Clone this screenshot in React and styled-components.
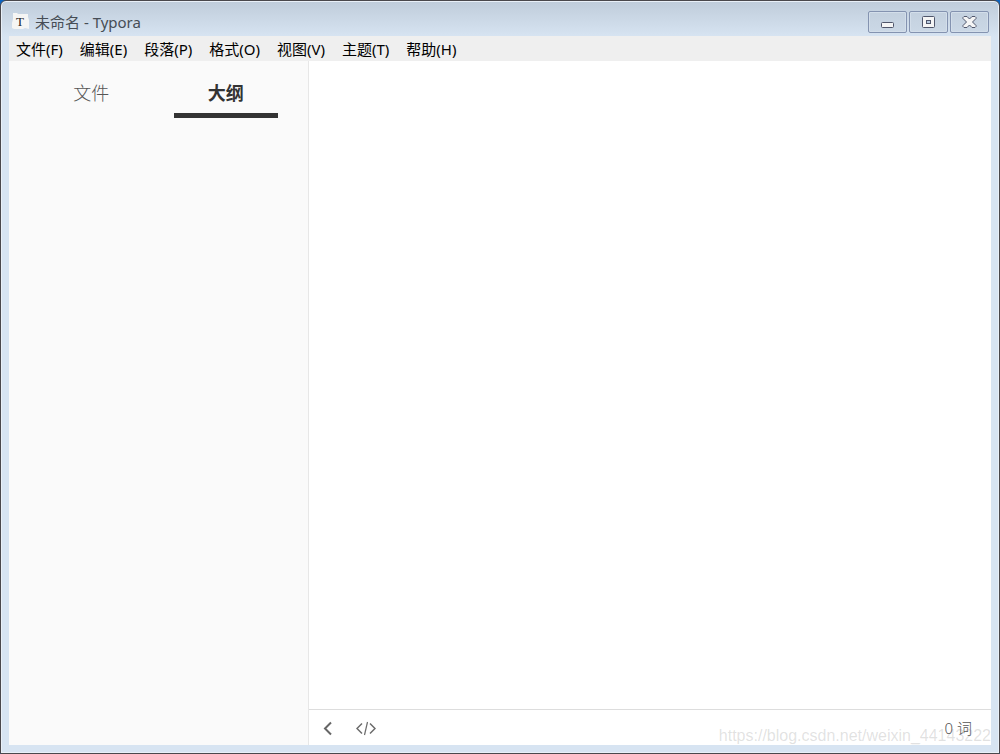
import React from 'react';
import styled, { createGlobalStyle } from 'styled-components';

const GlobalStyle = createGlobalStyle`
  * {
    box-sizing: border-box;
  }

  body {
    margin: 0;
    background: #0a63c2;
    font-family: 'Noto Sans', 'Noto Sans CJK SC', sans-serif;
  }

  button {
    padding: 0;
    border: none;
    background: none;
    font-family: inherit;
    cursor: pointer;
  }
`;

const Window = styled.div`
  display: flex;
  flex-direction: column;
  min-height: 100vh;
  padding: 0 7px 7px;
  border: 1px solid #4a484c;
  border-radius: 6px 6px 0 0;
  background: linear-gradient(#bfccda, #d7e4f2 36px);
  box-shadow: inset 0 0 0 1px #e9f0f8;
`;

const TitleBar = styled.header`
  display: flex;
  align-items: center;
  height: 35px;
  padding: 6px 3px 0 4px;
`;

const Title = styled.h1`
  flex: 1;
  margin: 0 0 0 6px;
  color: #464d55;
  font-size: 15px;
  font-weight: 400;
  line-height: 20px;
`;

const WindowButtons = styled.div`
  display: flex;
  gap: 2px;
`;

const WindowButton = styled.button`
  display: flex;
  align-items: center;
  justify-content: center;
  width: 39px;
  height: 22px;
  border: 1px solid #8493b0;
  border-radius: 2px;
  background: linear-gradient(#c3d0de, #cbd8e6);
  box-shadow: inset 0 0 0 1px #d3deea;
`;

const Client = styled.div`
  display: flex;
  flex: 1;
  flex-direction: column;
  margin: 0 1px 1px;
  background: #fff;
`;

const MenuBar = styled.nav`
  display: flex;
  gap: 3px;
  height: 25px;
  background: #efefef;
`;

const MenuItem = styled.button`
  padding: 0 7px;
  color: #000;
  font-size: 15px;
  line-height: 24px;
`;

const Workspace = styled.div`
  display: flex;
  flex: 1;
`;

const Sidebar = styled.aside`
  width: 300px;
  padding: 16px 15px;
  border-right: 1px solid #e7e7e7;
  background: #fafafa;
`;

const Tabs = styled.div`
  display: flex;
`;

const Tab = styled.button`
  flex: 1;
  margin: 0 15px;
  padding: 0 0 3px;
  border-bottom: 5px solid ${({ $active }) => ($active ? '#333' : 'transparent')};
  color: ${({ $active }) => ($active ? '#333' : '#555')};
  font-size: 18px;
  font-weight: ${({ $active }) => ($active ? 700 : 300)};
  line-height: 33px;
`;

const Main = styled.main`
  display: flex;
  flex: 1;
  flex-direction: column;
`;

const Editor = styled.div`
  flex: 1;
  outline: none;
`;

const StatusBar = styled.footer`
  position: relative;
  display: flex;
  align-items: center;
  height: 36px;
  padding: 0 19px 0 9px;
  border-top: 1px solid #ddd;
`;

const StatusButton = styled.button`
  display: flex;
  align-items: center;
  justify-content: center;
  width: 20px;
  height: 20px;
  margin-right: 18px;
`;

const WordCount = styled.button`
  margin-left: auto;
  color: #555;
  font-size: 15px;
  font-weight: 300;
  line-height: 20px;
`;

const Watermark = styled.span`
  position: absolute;
  right: 0;
  bottom: 0;
  color: rgba(120, 120, 120, 0.22);
  font-family: 'Liberation Sans', sans-serif;
  font-size: 16px;
  line-height: 18px;
  pointer-events: none;
`;

const AppLogo = () => (
  <svg width="17" height="17" viewBox="0 0 17 17" aria-hidden="true">
    <path d="M1 0h4l1 1h10v3l1 3v9l-4-1-2 1H2l-2-1v-5l1-4z" fill="#f5f5f4" />
    <text
      x="8"
      y="13"
      textAnchor="middle"
      fontFamily="'Liberation Serif', serif"
      fontSize="13"
      fill="#222"
    >
      T
    </text>
  </svg>
);

const MinimizeIcon = () => (
  <svg width="15" height="14" viewBox="0 0 15 14" aria-hidden="true">
    <rect x="1.5" y="7.5" width="12" height="5" rx="1" fill="#f5f5f5" stroke="#50566b" />
  </svg>
);

const MaximizeIcon = () => (
  <svg width="15" height="14" viewBox="0 0 15 14" aria-hidden="true">
    <rect x="1.5" y="1.5" width="12" height="11" rx="1" fill="#f5f5f5" stroke="#50566b" />
    <rect x="5.5" y="5.5" width="4" height="3" fill="#b9cbe0" stroke="#50566b" />
  </svg>
);

const CloseIcon = () => (
  <svg width="15" height="14" viewBox="0 0 15 14" aria-hidden="true">
    <path
      d="M2 1.5h3L7.500 4 10 1.500h3l1 1v1L10.500 7l3.500 3.500v1l-1 1h-3L7.500 10 5 12.500H2l-1-1v-1L4.500 7 1 3.500v-1z"
      fill="#f5f5f5"
      stroke="#50566b"
      strokeLinejoin="round"
    />
  </svg>
);

const BackIcon = () => (
  <svg width="20" height="20" viewBox="0 0 20 20" aria-hidden="true">
    <path d="M13 4.5l-6 6 6 6" fill="none" stroke="#666" strokeWidth="2" />
  </svg>
);

const SourceIcon = () => (
  <svg width="20" height="20" viewBox="0 0 20 20" aria-hidden="true">
    <path
      d="M6 5.5l-5 5 5 5M14 5.5l5 5-5 5"
      fill="none"
      stroke="#6b6b6b"
      strokeWidth="1.5"
    />
    <path d="M11.5 4l-3 13" stroke="#6b6b6b" strokeWidth="1.2" />
  </svg>
);

const menus = ['文件(F)', '编辑(E)', '段落(P)', '格式(O)', '视图(V)', '主题(T)', '帮助(H)'];

const App = () => {
  return (
    <>
      <GlobalStyle />
      <Window>
        <TitleBar>
          <AppLogo />
          <Title>未命名 - Typora</Title>
          <WindowButtons>
            <WindowButton aria-label="最小化">
              <MinimizeIcon />
            </WindowButton>
            <WindowButton aria-label="最大化">
              <MaximizeIcon />
            </WindowButton>
            <WindowButton aria-label="关闭">
              <CloseIcon />
            </WindowButton>
          </WindowButtons>
        </TitleBar>

        <Client>
          <MenuBar>
            {menus.map((menu) => (
              <MenuItem key={menu}>{menu}</MenuItem>
            ))}
          </MenuBar>

          <Workspace>
            <Sidebar>
              <Tabs role="tablist">
                <Tab role="tab" aria-selected="false">文件</Tab>
                <Tab role="tab" aria-selected="true" $active>大纲</Tab>
              </Tabs>
            </Sidebar>

            <Main>
              <Editor contentEditable suppressContentEditableWarning role="textbox" aria-label="正文" />
              <StatusBar>
                <StatusButton aria-label="侧边栏">
                  <BackIcon />
                </StatusButton>
                <StatusButton aria-label="源代码模式">
                  <SourceIcon />
                </StatusButton>
                <WordCount>0 词</WordCount>
                <Watermark>https://blog.csdn.net/weixin_44143222</Watermark>
              </StatusBar>
            </Main>
          </Workspace>
        </Client>
      </Window>
    </>
  );
};

export default App;
